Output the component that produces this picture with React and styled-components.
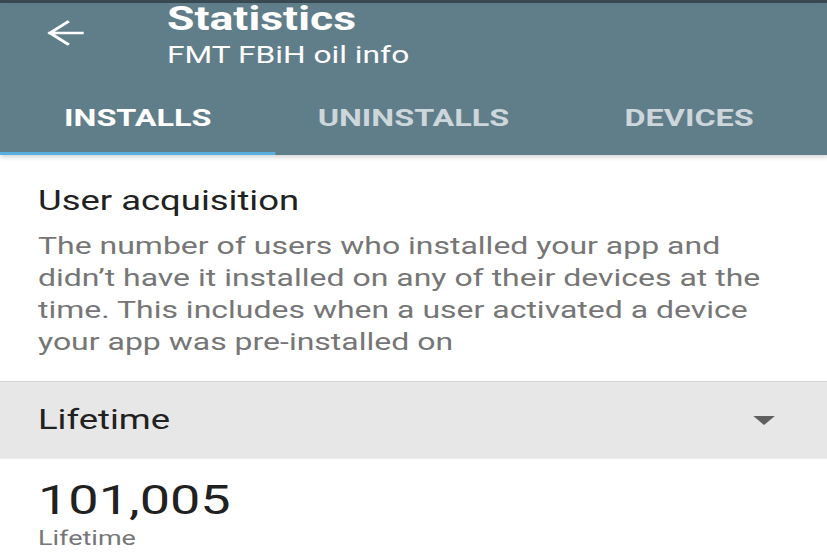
import React from "react";
import styled, { createGlobalStyle } from "styled-components";

// the reference screen is stretched sideways, so the page is laid out
// narrow and widened with one scaleX
const STRETCH = 1.35;

const GlobalStyle = createGlobalStyle`
  html, body {
    margin: 0;
    padding: 0;
    background: #ffffff;
    font-family: Roboto, "Noto Sans", sans-serif;
  }
`;

const Frame = styled.div`
  width: 827px;
  height: 558px;
  overflow: hidden;
  background: #fff;
`;

const Page = styled.div`
  width: ${827 / STRETCH}px;
  transform: scaleX(${STRETCH});
  transform-origin: 0 0;
`;

const StatusStrip = styled.div`
  height: 3px;
  background: #3a4a52;
`;

const Header = styled.header`
  background: #607d8a;
  box-shadow: 0 2px 4px rgba(0, 0, 0, 0.18);
  position: relative;
  z-index: 1;
`;

const TitleRow = styled.div`
  display: flex;
  align-items: flex-start;
  height: 77px;
`;

const BackButton = styled.div`
  width: ${167 / STRETCH}px;
  padding: 17px 0 0 ${46 / STRETCH}px;
  box-sizing: border-box;
  display: flex;
`;

const Titles = styled.div`
  display: flex;
  flex-direction: column;
  color: #fff;
  margin-top: -1px;
`;

const Title = styled.div`
  font-size: 33px;
  font-weight: 700;
  line-height: 33px;
`;

const Subtitle = styled.div`
  font-size: 23.5px;
  line-height: 24px;
  margin-top: 8px;
`;

const Tabs = styled.div`
  display: grid;
  grid-template-columns: repeat(3, 1fr);
  height: 75px;
`;

const Tab = styled.div`
  display: flex;
  align-items: center;
  justify-content: center;
  font-size: 24px;
  font-weight: 700;
  color: ${({ active }) => (active ? "#ffffff" : "#cdd6db")};
  border-bottom: 3px solid ${({ active }) => (active ? "#5aaee0" : "transparent")};
  padding-top: 4px;
`;

const Section = styled.section`
  padding: 30px ${38 / STRETCH}px 23px;
`;

const Heading = styled.div`
  font-size: 27px;
  color: #212121;
  line-height: 32px;
`;

const Description = styled.p`
  margin: 13px 0 0;
  font-size: 23.7px;
  line-height: 32px;
  color: #767676;
  white-space: nowrap;
`;

const Dropdown = styled.div`
  display: flex;
  align-items: center;
  justify-content: space-between;
  height: 76px;
  padding: 0 ${52 / STRETCH}px 0 ${38 / STRETCH}px;
  background: #e7e7e7;
  border-top: 1px solid #d2d2d2;
  border-bottom: 1px solid #ececec;
  font-size: 27px;
  color: #212121;
`;

const Caret = styled.div`
  width: 0;
  height: 0;
  border-left: ${11 / STRETCH}px solid transparent;
  border-right: ${11 / STRETCH}px solid transparent;
  border-top: 9px solid #5f5f5f;
`;

const Stat = styled.div`
  padding: 18px ${38 / STRETCH}px 0;
`;

const Value = styled.div`
  font-size: 40px;
  line-height: 48px;
  color: #212121;
`;

const ValueLabel = styled.div`
  font-size: 20px;
  line-height: 22px;
  margin-top: 2px;
  color: #777;
`;

const ArrowIcon = () => (
  <svg width="28" height="26" viewBox="0 0 28 26">
    <path
      d="M27 13H3M16 2L3 13l13 11"
      fill="none"
      stroke="#fff"
      strokeWidth="2.6"
      strokeLinecap="square"
    />
  </svg>
);

export default function App() {
  return (
    <Frame>
      <GlobalStyle />
      <Page>
        <StatusStrip />
        <Header>
          <TitleRow>
            <BackButton>
              <ArrowIcon />
            </BackButton>
            <Titles>
              <Title>Statistics</Title>
              <Subtitle>FMT FBiH oil info</Subtitle>
            </Titles>
          </TitleRow>
          <Tabs>
            <Tab active>INSTALLS</Tab>
            <Tab>UNINSTALLS</Tab>
            <Tab>DEVICES</Tab>
          </Tabs>
        </Header>
        <Section>
          <Heading>User acquisition</Heading>
          <Description>
            The number of users who installed your app and
            <br />
            didn’t have it installed on any of their devices at the
            <br />
            time. This includes when a user activated a device
            <br />
            your app was pre-installed on
          </Description>
        </Section>
        <Dropdown>
          <span>Lifetime</span>
          <Caret />
        </Dropdown>
        <Stat>
          <Value>101,005</Value>
          <ValueLabel>Lifetime</ValueLabel>
        </Stat>
      </Page>
    </Frame>
  );
}
